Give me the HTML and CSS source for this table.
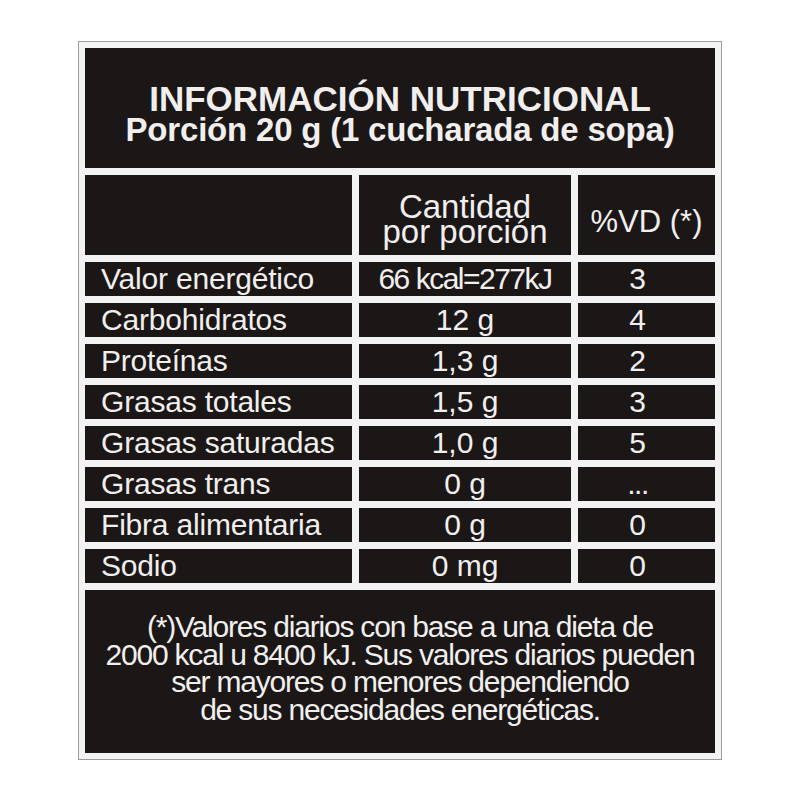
FILE: index.html
```html
<!DOCTYPE html>
<html lang="es">
<head>
<meta charset="utf-8">
<title>Información nutricional</title>
<link rel="stylesheet" href="styles.css">
</head>
<body>
<div class="label">
  <div class="grid">
    <div class="cell head">
      <div class="title">INFORMACIÓN NUTRICIONAL</div>
      <div class="subtitle">Porción 20 g (1 cucharada de sopa)</div>
    </div>

    <div class="cell"></div>
    <div class="cell colhead qty">Cantidad<br>por porción</div>
    <div class="cell colhead vd">%VD (*)</div>

    <div class="cell name">Valor energético</div>
    <div class="cell val tight">66 kcal=277kJ</div>
    <div class="cell pct">3</div>

    <div class="cell name">Carbohidratos</div>
    <div class="cell val">12 g</div>
    <div class="cell pct">4</div>

    <div class="cell name">Proteínas</div>
    <div class="cell val">1,3 g</div>
    <div class="cell pct">2</div>

    <div class="cell name">Grasas totales</div>
    <div class="cell val">1,5 g</div>
    <div class="cell pct">3</div>

    <div class="cell name">Grasas saturadas</div>
    <div class="cell val">1,0 g</div>
    <div class="cell pct">5</div>

    <div class="cell name">Grasas trans</div>
    <div class="cell val">0 g</div>
    <div class="cell pct dots">...</div>

    <div class="cell name">Fibra alimentaria</div>
    <div class="cell val">0 g</div>
    <div class="cell pct">0</div>

    <div class="cell name">Sodio</div>
    <div class="cell val">0 mg</div>
    <div class="cell pct">0</div>

    <div class="cell foot">(*)Valores diarios con base a una dieta de<br>2000 kcal u 8400 kJ. Sus valores diarios pueden<br>ser mayores o menores dependiendo<br>de sus necesidades energéticas.</div>
  </div>
</div>
</body>
</html>
```

FILE: styles.css
```css
html, body {
  margin: 0;
  padding: 0;
  background: #ffffff;
}

body {
  font-family: "Liberation Sans", Arial, sans-serif;
  color: #f1efee;
}

.label {
  margin: 41px 0 0 78px;
  width: 630px;
  padding: 6px;
  border: 1px solid #9c9c9c;
  background: #f3f3f3;
}

.grid {
  display: grid;
  grid-template-columns: 267px 212px 137px;
  grid-template-rows: 120px 80px repeat(8, 34px) 163px;
  gap: 7px;
}

.cell {
  background: #1c1717;
  overflow: hidden;
  white-space: nowrap;
}

.head {
  grid-column: 1 / 4;
  padding-top: 35px;
  text-align: center;
  font-weight: bold;
  line-height: 31px;
}

.title {
  font-size: 35px;
}

.subtitle {
  font-size: 33px;
  letter-spacing: -0.2px;
}

.colhead {
  text-align: center;
}

.qty {
  font-size: 33px;
  line-height: 25px;
  padding-top: 19px;
}

.vd {
  font-size: 31px;
  line-height: 31px;
  padding-top: 31px;
}

.name,
.val,
.pct {
  font-size: 30px;
  line-height: 33px;
}

.name {
  padding-left: 16px;
  letter-spacing: -0.2px;
}

.val {
  text-align: center;
}

.tight {
  letter-spacing: -1.5px;
}

.pct {
  text-align: center;
  padding-right: 18px;
}

.dots {
  letter-spacing: -1.5px;
}

.foot {
  grid-column: 1 / 4;
  text-align: center;
  font-size: 30px;
  line-height: 27.7px;
  letter-spacing: -1.2px;
  padding-top: 23px;
}
```
